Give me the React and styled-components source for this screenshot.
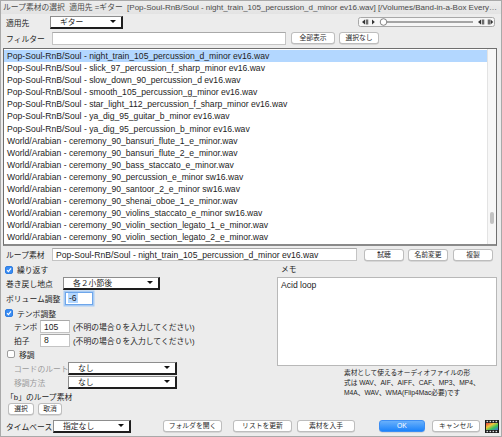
import React from 'react';
import styled, { createGlobalStyle, css } from 'styled-components';

const GlobalStyle = createGlobalStyle`
  html, body {
    margin: 0;
    padding: 0;
    background: #ececec;
  }
  body {
    font-family: "Liberation Sans", "Noto Sans CJK JP", sans-serif;
    color: #1d1d1d;
  }
`;

const Window = styled.div`
  width: 502px;
  height: 437px;
  box-sizing: border-box;
  border: 1px solid #a9a9a9;
  background: #ececec;
  display: flex;
  flex-direction: column;
  overflow: hidden;
  font-size: 7.8px;
`;

const TitleBar = styled.div`
  height: 13px;
  line-height: 13px;
  padding: 0 2px;
  font-size: 8px;
  color: #4b4b4b;
  white-space: pre;
  overflow: hidden;
  background: linear-gradient(#ededed, #e3e3e3);
`;

const TitleJa = styled.span`
  font-size: 7.8px;
`;

const Body = styled.div`
  flex: 1;
  display: flex;
  flex-direction: column;
  padding: 0 4px 0 1px;
`;

const Row = styled.div`
  display: flex;
  align-items: center;
  height: ${({ $h }) => $h}px;
  flex-shrink: 0;
`;

const Label = styled.span`
  box-sizing: border-box;
  width: ${({ $w }) => ($w ? `${$w}px` : 'auto')};
  padding-left: ${({ $indent }) => ($indent ? 12 : 4)}px;
  flex-shrink: 0;
  white-space: nowrap;
  color: ${({ $disabled }) => ($disabled ? '#9b9b9b' : '#1d1d1d')};
`;

const Popup = styled.div`
  position: relative;
  box-sizing: border-box;
  width: ${({ $w }) => $w}px;
  height: 13px;
  background: #fff;
  border: 1px solid #8d8d8d;
  border-right: 2px solid #1e1e1e;
  border-bottom: 2px solid #1e1e1e;
  padding-left: 9px;
  display: flex;
  align-items: center;
  flex-shrink: 0;
  white-space: nowrap;

  &::after {
    content: '';
    position: absolute;
    right: 5px;
    top: 3px;
    border-left: 3px solid transparent;
    border-right: 3px solid transparent;
    border-top: 3.5px solid #111;
  }
`;

const Field = styled.div`
  box-sizing: border-box;
  width: ${({ $w }) => $w}px;
  height: 13px;
  background: #fff;
  border: 1px solid #c4c4c4;
  border-top-color: #a9a9a9;
  padding: 0 3px;
  display: flex;
  align-items: center;
  flex-shrink: 0;
  font-size: 8.6px;
  white-space: nowrap;
  overflow: hidden;

  ${({ $focus }) =>
    $focus &&
    css`
      border: 1px solid #6ea6ea;
      box-shadow: 0 0 0 1.5px #a8cbf4;
      padding: 0 2px;
    `}
`;

const Selected = styled.span`
  background: #b3d7ff;
  padding: 0 1px;
`;

const Button = styled.button`
  box-sizing: border-box;
  width: ${({ $w }) => $w}px;
  height: 12px;
  margin-left: ${({ $ml }) => $ml || 0}px;
  padding: 0;
  flex-shrink: 0;
  border: 1px solid #bdbdbd;
  border-radius: 3px;
  background: #fff;
  box-shadow: 0 0.5px 0.5px rgba(0, 0, 0, 0.18);
  font: inherit;
  font-size: 6.8px;
  color: #2a2a2a;
  line-height: 10px;
  white-space: nowrap;

  ${({ $primary }) =>
    $primary &&
    css`
      border: 1px solid #3d8ef3;
      background: linear-gradient(#69b0fb, #1c83fa);
      color: #fff;
    `}
`;

const ListBox = styled.div`
  margin-top: 2px;
  margin-left: 1px;
  height: 198px;
  box-sizing: border-box;
  border: 1px solid #6f6f6f;
  border-bottom: 2px solid #8a8a8a;
  background: #fff;
  display: flex;
  flex-shrink: 0;
  overflow: hidden;
`;

const ListItems = styled.div`
  flex: 1;
  padding-top: 1px;
`;

const Item = styled.div`
  height: 12.1px;
  line-height: 12.1px;
  padding-left: 3px;
  font-size: 8.6px;
  white-space: nowrap;
  overflow: hidden;
  background: ${({ $active }) => ($active ? '#b3d7ff' : 'transparent')};
`;

const ScrollTrack = styled.div`
  position: relative;
  width: 8px;
  border-left: 1px solid #e3e3e3;
  background: #f7f7f7;
`;

const ScrollThumb = styled.div`
  position: absolute;
  left: 2px;
  top: 163px;
  width: 4px;
  height: 12px;
  border-radius: 2px;
  background: #c2c2c2;
`;

const Lower = styled.div`
  display: flex;
  height: 151px;
  flex-shrink: 0;
`;

const LeftCol = styled.div`
  width: 275px;
  display: flex;
  flex-direction: column;
  flex-shrink: 0;
`;

const RightCol = styled.div`
  flex: 1;
  display: flex;
  flex-direction: column;
`;

const Check = styled.span`
  box-sizing: border-box;
  width: 8px;
  height: 8px;
  margin: 0 4px 0 ${({ $ml }) => $ml || 3}px;
  border-radius: 2px;
  flex-shrink: 0;
  display: inline-flex;
  align-items: center;
  justify-content: center;
  ${({ $checked }) =>
    $checked
      ? css`
          background: #3a8cf3;
          border: 1px solid #2f7de0;
        `
      : css`
          background: #fff;
          border: 1px solid #9d9d9d;
        `}
`;

const Note = styled.span`
  margin-left: 3px;
  white-space: nowrap;
`;

const MemoLabel = styled.div`
  height: 14px;
  line-height: 14px;
  padding-left: 4px;
`;

const MemoBox = styled.div`
  height: 89px;
  box-sizing: border-box;
  border: 1px solid #b8b8b8;
  background: #fff;
  padding: 1px 3px;
  font-size: 8.6px;
  line-height: 12px;
`;

const Info = styled.div`
  margin: 2px 0 0 67px;
  font-size: 6.7px;
  line-height: 10px;
  white-space: nowrap;
  color: #222;
`;

const Footer = styled.div`
  display: flex;
  align-items: center;
  height: 22px;
  padding-top: 2px;
  box-sizing: border-box;
  flex-shrink: 0;
`;

const PlayerWrap = styled.div`
  margin-left: auto;
  margin-right: 2px;
  display: flex;
`;

const FilmWrap = styled.div`
  margin-left: 5px;
  display: flex;
`;

const items = [
  'Pop-Soul-RnB/Soul - night_train_105_percussion_d_minor ev16.wav',
  'Pop-Soul-RnB/Soul - slick_97_percussion_f_sharp_minor ev16.wav',
  'Pop-Soul-RnB/Soul - slow_down_90_percussion_d ev16.wav',
  'Pop-Soul-RnB/Soul - smooth_105_percussion_g_minor ev16.wav',
  'Pop-Soul-RnB/Soul - star_light_112_percussion_f_sharp_minor ev16.wav',
  'Pop-Soul-RnB/Soul - ya_dig_95_guitar_b_minor ev16.wav',
  'Pop-Soul-RnB/Soul - ya_dig_95_percussion_b_minor ev16.wav',
  'World/Arabian - ceremony_90_bansuri_flute_1_e_minor.wav',
  'World/Arabian - ceremony_90_bansuri_flute_2_e_minor.wav',
  'World/Arabian - ceremony_90_bass_staccato_e_minor.wav',
  'World/Arabian - ceremony_90_percussion_e_minor sw16.wav',
  'World/Arabian - ceremony_90_santoor_2_e_minor sw16.wav',
  'World/Arabian - ceremony_90_shenai_oboe_1_e_minor.wav',
  'World/Arabian - ceremony_90_violins_staccato_e_minor sw16.wav',
  'World/Arabian - ceremony_90_violin_section_legato_1_e_minor.wav',
  'World/Arabian - ceremony_90_violin_section_legato_2_e_minor.wav',
];

function Tick() {
  return (
    <svg width="6" height="6" viewBox="0 0 6 6">
      <path d="M1 3.2 L2.4 4.6 L5 1.4" fill="none" stroke="#fff" strokeWidth="1.2" />
    </svg>
  );
}

function Player() {
  return (
    <PlayerWrap>
      <svg width="137" height="10" viewBox="0 0 137 10">
        <rect x="0.5" y="0.5" width="136" height="9" rx="2" fill="#f6f6f6" stroke="#a8a8a8" />
        <path d="M4 5 L7 2.5 L7 7.5 Z" fill="#333" />
        <rect x="7.8" y="2.5" width="0.9" height="5" fill="#333" />
        <rect x="9.3" y="2.5" width="0.9" height="5" fill="#333" />
        <path d="M14 2.5 L16.8 5 L14 7.5 Z" fill="#333" />
        <line x1="29" y1="5" x2="115" y2="5" stroke="#555" strokeWidth="1" />
        <circle cx="25.5" cy="5" r="3.3" fill="#fff" stroke="#777" strokeWidth="0.9" />
        <path d="M120 5 L123 2.5 L123 7.5 Z" fill="#333" />
        <rect x="123.8" y="2.5" width="0.9" height="5" fill="#333" />
        <rect x="125.3" y="2.5" width="0.9" height="5" fill="#333" />
        <rect x="129.8" y="2.5" width="0.9" height="5" fill="#333" />
        <rect x="131.3" y="2.5" width="0.9" height="5" fill="#333" />
        <path d="M132.6 2.5 L135.2 5 L132.6 7.5 Z" fill="#333" />
      </svg>
    </PlayerWrap>
  );
}

function FilmIcon() {
  return (
    <FilmWrap>
      <svg width="14" height="13" viewBox="0 0 14 13">
        <defs>
          <linearGradient id="rb" x1="0" y1="0" x2="1" y2="1">
            <stop offset="0" stopColor="#e23b3b" />
            <stop offset="0.35" stopColor="#f2c53a" />
            <stop offset="0.65" stopColor="#39c45a" />
            <stop offset="1" stopColor="#3a6fe0" />
          </linearGradient>
        </defs>
        <rect x="0" y="0" width="14" height="13" fill="#1a1a1a" />
        {[1, 4, 7, 10].map((x) => (
          <rect key={`t${x}`} x={x + 0.5} y="0.8" width="1.6" height="1.4" fill="#ddd" />
        ))}
        {[1, 4, 7, 10].map((x) => (
          <rect key={`b${x}`} x={x + 0.5} y="10.8" width="1.6" height="1.4" fill="#ddd" />
        ))}
        <rect x="1" y="3" width="12" height="7" fill="url(#rb)" />
      </svg>
    </FilmWrap>
  );
}

export default function App() {
  return (
    <>
      <GlobalStyle />
      <Window>
        <TitleBar>
          <TitleJa>{'ループ素材の選択  適用先 =ギター  '}</TitleJa>
          {'[Pop-Soul-RnB/Soul - night_train_105_percussion_d_minor ev16.wav] [/Volumes/Band-in-a-Box Every…'}
        </TitleBar>
        <Body>
          <Row $h={16}>
            <Label $w={48}>適用先</Label>
            <Popup $w={73}>ギター</Popup>
            <Player />
          </Row>
          <Row $h={16}>
            <Label $w={50}>フィルター</Label>
            <Field $w={234} />
            <Button $w={44} $ml={5}>全部表示</Button>
            <Button $w={40} $ml={4}>選択なし</Button>
          </Row>

          <ListBox>
            <ListItems>
              {items.map((name, i) => (
                <Item key={name} $active={i === 0}>
                  {name}
                </Item>
              ))}
            </ListItems>
            <ScrollTrack>
              <ScrollThumb />
            </ScrollTrack>
          </ListBox>

          <Row $h={17}>
            <Label $w={50}>ループ素材</Label>
            <Field $w={305}>Pop-Soul-RnB/Soul - night_train_105_percussion_d_minor ev16.wav</Field>
            <Button $w={40} $ml={7}>試聴</Button>
            <Button $w={40} $ml={4}>名前変更</Button>
            <Button $w={40} $ml={5}>複製</Button>
          </Row>

          <Lower>
            <LeftCol>
              <Row $h={13}>
                <Check $checked>
                  <Tick />
                </Check>
                <span>繰り返す</span>
              </Row>
              <Row $h={14}>
                <Label $w={61}>巻き戻し地点</Label>
                <Popup $w={97}>各２小節後</Popup>
              </Row>
              <Row $h={16}>
                <Label $w={63}>ボリューム調整</Label>
                <Field $w={28} $focus>
                  <Selected>-6</Selected>
                </Field>
              </Row>
              <Row $h={14}>
                <Check $checked>
                  <Tick />
                </Check>
                <span>テンポ調整</span>
              </Row>
              <Row $h={13}>
                <Label $w={38} $indent>テンポ</Label>
                <Field $w={30}>105</Field>
                <Note>(不明の場合０を入力してください)</Note>
              </Row>
              <Row $h={14}>
                <Label $w={38} $indent>拍子</Label>
                <Field $w={30}>8</Field>
                <Note>(不明の場合０を入力してください)</Note>
              </Row>
              <Row $h={14}>
                <Check $ml={5} />
                <span>移調</span>
              </Row>
              <Row $h={14}>
                <Label $w={66} $indent $disabled>
                  コードのルート
                </Label>
                <Popup $w={109}>なし</Popup>
              </Row>
              <Row $h={14}>
                <Label $w={66} $indent $disabled>
                  移調方法
                </Label>
                <Popup $w={109}>なし</Popup>
              </Row>
              <Row $h={14}>
                <Label>「b」のループ素材</Label>
              </Row>
              <Row $h={11}>
                <Button $w={26} $ml={6}>選択</Button>
                <Button $w={24} $ml={4}>取消</Button>
              </Row>
            </LeftCol>

            <RightCol>
              <MemoLabel>メモ</MemoLabel>
              <MemoBox>Acid loop</MemoBox>
              <Info>
                <div>素材として使えるオーディオファイルの形</div>
                <div>式は WAV、AIF、AIFF、CAF、MP3、MP4、</div>
                <div>M4A、WAV、WMA(Flip4Mac必要)です</div>
              </Info>
            </RightCol>
          </Lower>

          <Footer>
            <Label $w={51}>タイムベース</Label>
            <Popup $w={78}>指定なし</Popup>
            <Button $w={59} $ml={32}>フォルダを開く</Button>
            <Button $w={59} $ml={11}>リストを更新</Button>
            <Button $w={58} $ml={5}>素材を入手</Button>
            <Button $w={46} $ml={24} $primary>
              OK
            </Button>
            <Button $w={48} $ml={7}>キャンセル</Button>
            <FilmIcon />
          </Footer>
        </Body>
      </Window>
    </>
  );
}
